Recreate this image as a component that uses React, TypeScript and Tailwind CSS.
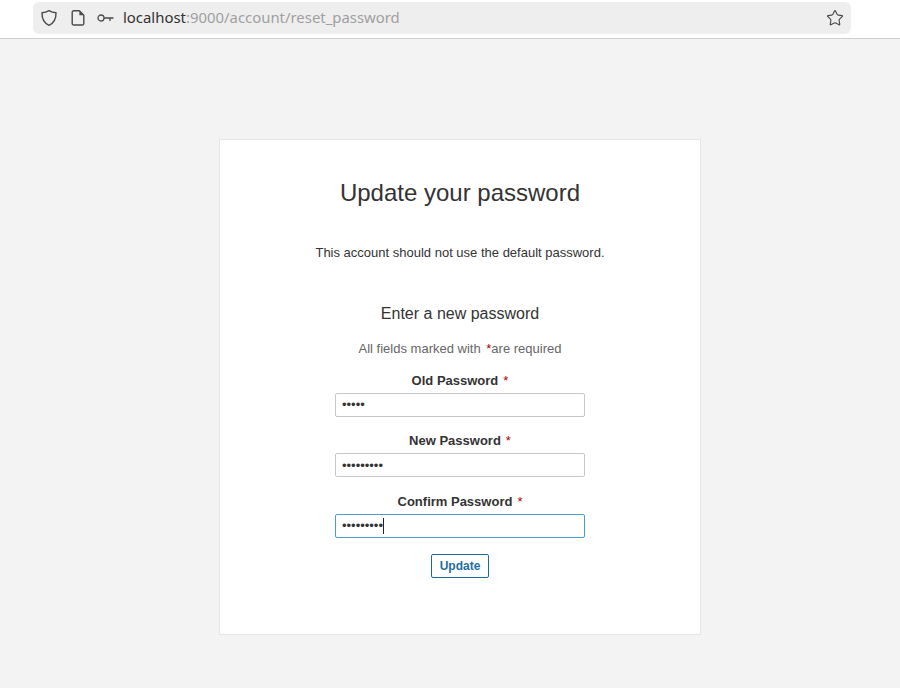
import { Star } from 'lucide-react';

interface PasswordFieldProps {
  label: string;
  value: string;
  focused?: boolean;
}

function ShieldIcon() {
  return (
    <svg width="18" height="18" viewBox="0 0 18 18" fill="none" stroke="#4a4a4a" strokeWidth="1.4">
      <path d="M9 1.6 C11.2 2.9 13.6 3.6 16 3.8 C16.2 9.6 14 14 9 16.4 C4 14 1.8 9.6 2 3.8 C4.4 3.6 6.8 2.9 9 1.6 Z" strokeLinejoin="round" />
    </svg>
  );
}

function PageIcon() {
  return (
    <svg width="14" height="16" viewBox="0 0 14 16" fill="none" stroke="#4a4a4a" strokeWidth="1.4">
      <path d="M1.2 2.4 A1.6 1.6 0 0 1 2.8 0.8 H8.4 L12.8 5.2 V13.4 A1.6 1.6 0 0 1 11.2 15 H2.8 A1.6 1.6 0 0 1 1.2 13.4 Z" strokeLinejoin="round" />
      <path d="M8.4 0.8 L12.8 5.2 H8.4 Z" fill="#4a4a4a" stroke="none" />
    </svg>
  );
}

function KeyIcon() {
  return (
    <svg width="17" height="10" viewBox="0 0 17 10" fill="none" stroke="#4a4a4a" strokeWidth="1.3">
      <circle cx="4" cy="5" r="3" />
      <path d="M7 5 H16.5 M13 5 V8" />
    </svg>
  );
}

function PasswordField({ label, value, focused = false }: PasswordFieldProps) {
  return (
    <div className="flex flex-col items-center">
      <label className="h-6 text-[13px] leading-[23px] font-bold text-[#333]">
        {label}
        <span className="ml-[5px] font-normal text-[#a00]">*</span>
      </label>
      <div className="relative w-[250px]">
        <input
          type="password"
          readOnly
          value={value}
          className={`block h-6 w-full rounded-[2px] border bg-white px-[6px] text-[13px] text-[#333] outline-none ${
            focused ? 'border-[#4a9bd4]' : 'border-[#c8c8c8]'
          }`}
        />
        {focused && <span className="absolute top-[4px] left-[48px] h-4 w-px bg-[#222]" />}
      </div>
    </div>
  );
}

export default function App() {
  return (
    <div className="flex h-[688px] w-[900px] flex-col overflow-hidden bg-[#f3f3f3] font-['Liberation_Sans',sans-serif]">
      {/* browser toolbar */}
      <div className="flex h-[39px] shrink-0 border-b border-[#cfcfcf] bg-white pt-[2px] pr-[49px] pl-[33px]">
        <div className="flex h-8 w-full items-center rounded-md bg-[#eeeeee] pr-[7px] pl-[7px]">
          <ShieldIcon />
          <span className="ml-[13px] flex"><PageIcon /></span>
          <span className="ml-[12px] flex"><KeyIcon /></span>
          <span className="-mt-[2px] ml-[9px] font-['Noto_Sans',sans-serif] text-[14.9px] text-[#333]">
            localhost<span className="text-[#a0a0a0]">:9000/account/reset_password</span>
          </span>
          <Star className="ml-auto h-[18px] w-[18px] text-[#4a4a4a]" strokeWidth={1.5} />
        </div>
      </div>

      {/* page */}
      <div className="flex justify-center pt-[100px] pl-5">
        <div className="flex h-[496px] w-[482px] flex-col items-center border border-[#e6e6e6] bg-white pt-[39px]">
          <h1 className="h-[28px] text-[24px] leading-[28px] text-[#333]">Update your password</h1>
          <p className="mt-[38px] h-[16px] text-[13px] leading-[16px] text-[#333]">
            This account should not use the default password.
          </p>
          <h2 className="mt-[43px] h-[20px] text-[16px] leading-[20px] text-[#333]">Enter a new password</h2>
          <p className="mt-[17px] h-[16px] text-[13px] leading-[16px] text-[#666]">
            All fields marked with <span className="ml-[2px] text-[#a00]">*</span>
            <span>are required</span>
          </p>
          <div className="mt-[11.9px] flex flex-col gap-[12.5px]">
            <PasswordField label="Old Password" value="admin" />
            <PasswordField label="New Password" value="password1" />
            <PasswordField label="Confirm Password" value="password1" focused />
          </div>
          <button className="mt-4 h-6 w-[58px] rounded-[2px] border border-[#1a6a9a] bg-white text-[12px] font-bold text-[#1f6f9f]">
            Update
          </button>
        </div>
      </div>
    </div>
  );
}
